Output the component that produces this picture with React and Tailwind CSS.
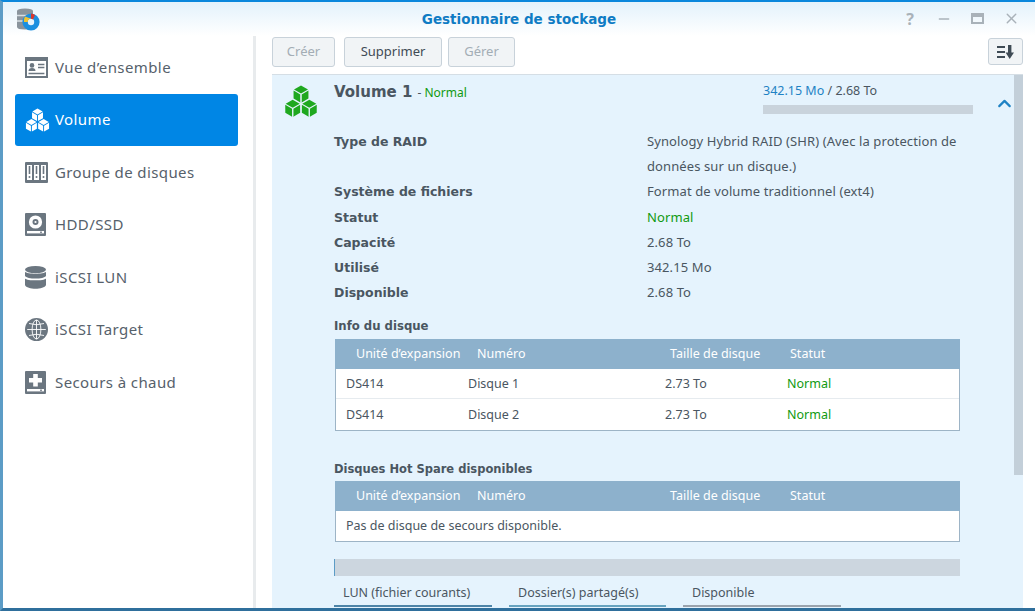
import React from 'react';
import { ChevronUp, X, Minus } from 'lucide-react';

const FONT = "font-['Noto_Sans','Open_Sans',sans-serif]";

// cube isometrique, utilise par le volume (menu + panneau)
function Cubes({ color, gap, className }) {
  const cube = (x, y) => (
    <g transform={`translate(${x} ${y})`}>
      <path d="M0 -7.6 L6.6 -3.8 L0 0 L-6.6 -3.8 Z" fill={color} />
      <path d="M-7 -2.8 L-0.6 0.9 L-0.6 8.4 L-7 4.7 Z" fill={color} />
      <path d="M7 -2.8 L0.6 0.9 L0.6 8.4 L7 4.7 Z" fill={color} />
    </g>
  );
  return (
    <svg viewBox="0 0 32 30" className={className}>
      {cube(16, 8)}
      {cube(8.2, 21.4)}
      {cube(23.8, 21.4)}
      {gap && <path d="M16 8 V16 M8.2 21.4 V29 M23.8 21.4 V29" stroke={gap} strokeWidth="0.6" />}
    </svg>
  );
}

function OverviewIcon() {
  return (
    <svg viewBox="0 0 23 21" className="w-[23px] h-[21px]">
      <rect width="23" height="21" fill="#6b7680" />
      <rect x="2" y="4" width="19" height="15" fill="#fff" />
      <circle cx="7" cy="8.4" r="2.3" fill="#6b7680" />
      <path d="M3.5 14 Q3.5 11 7 11 Q10.5 11 10.5 14 Z" fill="#6b7680" />
      <path d="M13 7.4 H19.4 M13 10.4 H19.4 M3.5 16.4 H19.4" stroke="#6b7680" strokeWidth="1.5" />
    </svg>
  );
}

function GroupIcon() {
  return (
    <svg viewBox="0 0 23 21" className="w-[23px] h-[21px]">
      <rect width="23" height="21" rx="1" fill="#6b7680" />
      <rect x="2" y="3" width="5" height="15" fill="#fff" />
      <rect x="9" y="3" width="5" height="15" fill="#fff" />
      <rect x="16" y="3" width="5" height="15" fill="#fff" />
      <path d="M4.5 4 V12 M11.5 4 V12 M18.5 4 V12" stroke="#6b7680" strokeWidth="1.6" />
      <circle cx="4.5" cy="15" r="1" fill="#6b7680" />
      <circle cx="11.5" cy="15" r="1" fill="#6b7680" />
      <circle cx="18.5" cy="15" r="1" fill="#6b7680" />
    </svg>
  );
}

function DiskIcon() {
  return (
    <svg viewBox="0 0 21 23" className="w-[21px] h-[23px]">
      <rect width="21" height="23" rx="1" fill="#6b7680" />
      <circle cx="10.5" cy="9" r="6.6" fill="#fff" />
      <circle cx="10.5" cy="9" r="3" fill="#6b7680" />
      <circle cx="10.5" cy="9" r="1.1" fill="#fff" />
      <rect x="2" y="18" width="17" height="2.4" fill="#fff" />
      <rect x="15" y="18.6" width="2" height="1.2" fill="#6b7680" />
    </svg>
  );
}

function LunIcon() {
  return (
    <svg viewBox="0 0 21 23" className="w-[21px] h-[23px]">
      <ellipse cx="10.5" cy="3.6" rx="10.5" ry="3.6" fill="#6b7680" />
      <path d="M0 5.8 C2 8.4 19 8.4 21 5.8 V10 C19 13.4 2 13.4 0 10 Z" fill="#6b7680" />
      <path d="M0 12.4 C2 15 19 15 21 12.4 V19 C19 24 2 24 0 19 Z" fill="#6b7680" />
    </svg>
  );
}

function TargetIcon() {
  return (
    <svg viewBox="0 0 23 23" className="w-[23px] h-[23px]">
      <circle cx="11.5" cy="11.5" r="11.5" fill="#6b7680" />
      <g fill="none" stroke="#fff" strokeWidth="0.9">
        <ellipse cx="11.5" cy="11.5" rx="4.4" ry="9.5" />
        <path d="M11.5 2 V21 M4 5.5 Q11.5 8 19 5.5 M2.2 11.5 H20.8 M4 17.5 Q11.5 15 19 17.5" />
      </g>
    </svg>
  );
}

function SpareIcon() {
  return (
    <svg viewBox="0 0 21 23" className="w-[21px] h-[23px]">
      <rect width="21" height="23" rx="1" fill="#6b7680" />
      <path d="M8.2 3 H12.8 V7 H17 V11.4 H12.8 V15.4 H8.2 V11.4 H4 V7 H8.2 Z" fill="#fff" />
      <rect x="2" y="18" width="17" height="2.4" fill="#fff" />
      <rect x="15" y="18.6" width="2" height="1.2" fill="#6b7680" />
    </svg>
  );
}

function AppLogo() {
  return (
    <svg viewBox="0 0 25 24" className="w-[25px] h-[24px]">
      <path d="M1 3 Q1 0.5 9 0.5 Q17 0.5 17 3 V19 Q17 21.5 9 21.5 Q1 21.5 1 19 Z" fill="#8a949c" />
      <path d="M1 7.5 H17 M1 13 H17" stroke="#d8dee2" strokeWidth="1.4" />
      <circle cx="15" cy="14" r="8.6" fill="#1b8fe0" />
      <circle cx="15" cy="14" r="3.2" fill="#e9f4fb" />
      <path d="M15 10.8 L9 8.5 A8 8 0 0 0 8 14 L11.8 14 A3.2 3.2 0 0 1 15 10.8 Z" fill="#f2c230" />
      <path d="M15 10.8 L15 5.4 A8 8 0 0 1 19 7 L17 11.4 A3.2 3.2 0 0 0 15 10.8 Z" fill="#d9362c" />
    </svg>
  );
}

function SortIcon() {
  return (
    <svg viewBox="0 0 17 14" className="w-[17px] h-[14px]">
      <path d="M0 2 H8 M0 7 H8 M0 12 H8" stroke="#3f4b55" strokeWidth="2" />
      <path d="M11 0 H14.4 V7.5 H17 L12.7 14 L8.6 7.5 H11 Z" fill="#3f4b55" />
    </svg>
  );
}

const menu = [
  { label: 'Vue d’ensemble', icon: <OverviewIcon /> },
  { label: 'Volume', icon: <Cubes color="#fff" className="w-[25px] h-[24px]" />, active: true },
  { label: 'Groupe de disques', icon: <GroupIcon /> },
  { label: 'HDD/SSD', icon: <DiskIcon /> },
  { label: 'iSCSI LUN', icon: <LunIcon /> },
  { label: 'iSCSI Target', icon: <TargetIcon /> },
  { label: 'Secours à chaud', icon: <SpareIcon /> },
];

const infos = [
  ['Type de RAID', 'Synology Hybrid RAID (SHR) (Avec la protection de données sur un disque.)'],
  ['Système de fichiers', 'Format de volume traditionnel (ext4)'],
  ['Statut', 'Normal'],
  ['Capacité', '2.68 To'],
  ['Utilisé', '342.15 Mo'],
  ['Disponible', '2.68 To'],
];

function TableHead() {
  return (
    <div className="grid grid-cols-[121px_193px_120px_1fr] h-[30px] items-center pl-[21px] bg-[#8db1cc] text-white text-[12.5px] -mx-px">
      <span>Unité d’expansion</span>
      <span>Numéro</span>
      <span>Taille de disque</span>
      <span>Statut</span>
    </div>
  );
}

function DiskRow({ name, last }) {
  return (
    <div className={`grid grid-cols-[122px_197px_122px_1fr] items-center pl-[10px] text-[12.5px] ${last ? 'h-[31px]' : 'h-[30px] border-b border-[#e6ebef]'}`}>
      <span>DS414</span>
      <span>{name}</span>
      <span>2.73 To</span>
      <span className="text-[#109a10]">Normal</span>
    </div>
  );
}

function ToolButton({ children, disabled, className }) {
  return (
    <button
      type="button"
      className={`h-[30px] rounded-[3px] border border-[#c8d2da] bg-[#f1f4f6] text-[13px] ${disabled ? 'text-[#a3adb5]' : 'text-[#3f4b55]'} ${className}`}
    >
      {children}
    </button>
  );
}

export default function App() {
  return (
    <div className={`${FONT} relative flex flex-col w-[1035px] h-[611px] overflow-hidden bg-white border-t-2 border-t-[#0a87dc] border-l-[3px] border-l-[#5c9cc6] border-b-[3px] border-b-[#2f6f9c] text-[#4a5661]`}>
      {/* barre de titre */}
      <div className="relative flex items-center justify-center shrink-0 h-[34px] bg-gradient-to-b from-[#e3f2fb] to-white">
        <div className="absolute left-[13px] top-[6px]"><AppLogo /></div>
        <span className="font-['DejaVu_Sans',sans-serif] font-bold text-[13.5px] text-[#0f7cc4]">Gestionnaire de stockage</span>
        <div className="absolute right-[15px] top-[8px] flex items-center gap-[19px] text-[#a9b2b9]">
          <span className="font-bold text-[16px] leading-4 w-[14px] text-center">?</span>
          <Minus size={16} strokeWidth={2} />
          <span className="w-[13px] h-[11px] border-2 border-t-4 border-[#a9b2b9]" />
          <X size={17} strokeWidth={2} />
        </div>
      </div>

      <div className="flex flex-1 min-h-0">
        {/* menu de gauche */}
        <aside className="w-[253px] shrink-0 border-r-[3px] border-[#e8ebed] pl-[12px] pr-[15px] pt-[5px] flex flex-col gap-[0.5px]">
          {menu.map((item) => (
            <div
              key={item.label}
              className={`flex items-center h-[52px] rounded-[3px] pl-[10px] text-[15px] tracking-[0.4px] ${item.active ? 'bg-[#0086e5] text-white' : 'text-[#56616b]'}`}
            >
              <span className="w-[30px] flex justify-start">{item.icon}</span>
              <span>{item.label}</span>
            </div>
          ))}
        </aside>

        {/* contenu */}
        <main className="flex-1 min-w-0 flex flex-col pl-[16px] pr-[12px]">
          <div className="flex items-start gap-[9px] pt-px h-[39px] shrink-0 border-b border-[#d5dee5]">
            <ToolButton disabled className="w-[63px]">Créer</ToolButton>
            <ToolButton className="w-[98px] -mr-[3px]">Supprimer</ToolButton>
            <ToolButton disabled className="w-[67px]">Gérer</ToolButton>
            <button type="button" className="ml-auto mt-px w-[35px] h-[27px] rounded-[3px] border border-[#c8d2da] bg-[#f1f4f6] flex items-center justify-center">
              <SortIcon />
            </button>
          </div>

          <section className="relative flex-1 min-h-0 overflow-hidden bg-[#e5f3fd] text-[13px]">
            <div className="absolute right-0 top-0 w-[9px] h-[400px] bg-[#c3cfd9]" />

            <div className="flex h-[54px] pl-[12px] pt-[9px]">
              <Cubes color="#1fa81f" gap="#e5f3fc" className="w-[34px] h-[34px]" />
              <div className="ml-[16px] -mt-[3px] flex items-baseline h-fit">
                <span className="font-['DejaVu_Sans',sans-serif] font-bold text-[15px]">Volume 1</span>
                <span className="text-[12px] ml-[5px]">- <span className="text-[#109a10]">Normal</span></span>
              </div>
              <div className="absolute left-[491px] top-[7px] w-[210px]">
                <div className="text-[12.5px]"><span className="text-[#1f82c4]">342.15 Mo</span> / 2.68 To</div>
                <div className="h-[9px] mt-[4px] bg-[#c9d3dc]" />
              </div>
              <ChevronUp className="absolute left-[722px] top-[18px] text-[#1f82c4]" size={21} strokeWidth={2.5} />
            </div>

            <div className="pl-[62px]">
              {infos.map(([label, value]) => (
                <div key={label} className="grid grid-cols-[313px_320px] leading-[25.2px]">
                  <span className="font-['DejaVu_Sans',sans-serif] font-bold text-[12.5px]">{label}</span>
                  <span className={`tracking-[0.1px] ${value === 'Normal' ? 'text-[#109a10]' : ''}`}>{value}</span>
                </div>
              ))}
            </div>

            <div className="ml-[62px] w-[626px]">
              <h3 className="font-['DejaVu_Sans',sans-serif] font-bold text-[11.7px] mt-[11px] leading-5">Info du disque</h3>
              <div className="mt-[3px] ml-px border border-t-0 border-[#9db4c6] bg-white">
                <TableHead />
                <DiskRow name="Disque 1" />
                <DiskRow name="Disque 2" last />
              </div>

              <h3 className="font-['DejaVu_Sans',sans-serif] font-bold text-[11.5px] mt-[28px] leading-5">Disques Hot Spare disponibles</h3>
              <div className="mt-[2px] ml-px border border-t-0 border-[#9db4c6] bg-white">
                <TableHead />
                <div className="h-[30px] flex items-center pl-[10px] text-[12.5px]">Pas de disque de secours disponible.</div>
              </div>

              <div className="h-[17px] mt-[17px] bg-[#ccd6df] border-l border-[#5c9cc6]" />

              <div className="flex gap-[17px] mt-[8px] text-[12.5px]">
                <div className="w-[158px] h-[23px] pl-[9px] border-b-2 border-[#4d84a8]">LUN (fichier courants)</div>
                <div className="w-[157px] h-[23px] pl-[9px] border-b-2 border-[#67a3bf]">Dossier(s) partagé(s)</div>
                <div className="w-[158px] h-[23px] pl-[9px] border-b-2 border-[#9aa3ad]">Disponible</div>
              </div>
            </div>
          </section>
        </main>
      </div>
    </div>
  );
}
